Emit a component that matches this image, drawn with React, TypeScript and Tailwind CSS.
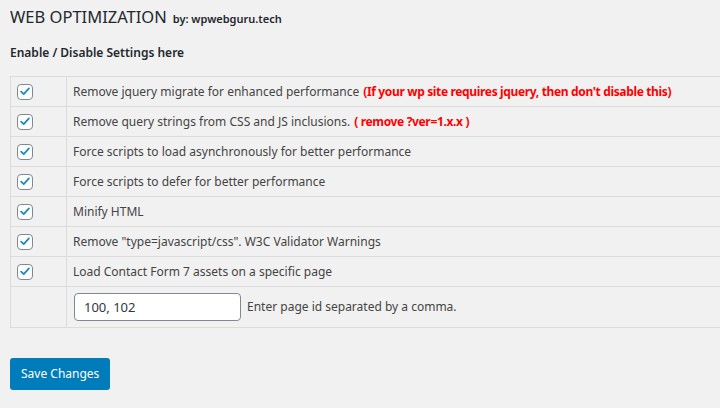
import React from 'react';

const rows: { label: string; note?: string }[] = [
  { label: 'Remove jquery migrate for enhanced performance', note: "(If your wp site requires jquery, then don't disable this)" },
  { label: 'Remove query strings from CSS and JS inclusions.', note: '( remove ?ver=1.x.x )' },
  { label: 'Force scripts to load asynchronously for better performance' },
  { label: 'Force scripts to defer for better performance' },
  { label: 'Minify HTML' },
  { label: 'Remove "type=javascript/css". W3C Validator Warnings' },
  { label: 'Load Contact Form 7 assets on a specific page' },
];

function CheckBox() {
  return (
    <span className="flex h-4 w-4 items-center justify-center rounded-[4px] border border-[#7e8993] bg-white">
      <svg viewBox="0 0 20 20" className="h-[15px] w-[15px]">
        <path d="M4.5 10.2 L8.2 13.8 L15.6 5.6" fill="none" stroke="#1e8cbe" strokeWidth="2.6" strokeLinecap="round" strokeLinejoin="round" />
      </svg>
    </span>
  );
}

export default function App() {
  return (
    <div className="min-h-[408px] w-[720px] overflow-hidden bg-[#f1f1f1] pl-[10px] pt-[5px] text-[12px] text-[#444] [font-family:'Noto_Sans',sans-serif]">
      <h1 className="flex items-baseline gap-[6px] text-[16.5px] leading-[24px] text-[#23282d]">
        WEB OPTIMIZATION
        <span className="text-[11px] font-semibold">by: wpwebguru.tech</span>
      </h1>

      <h3 className="mt-[12px] text-[12px] font-semibold leading-[20px] text-[#23282d]">Enable / Disable Settings here</h3>

      {/* Settings table */}
      <table className="mt-[13px] w-[760px] border-collapse border-l border-t border-[#dcdcdc]">
        <tbody>
          {rows.map((r, i) => (
            <tr key={i} className="h-[30px] border-b border-[#dcdcdc]">
              <td className="w-[56px] border-r border-[#dcdcdc] pl-[6px] align-middle">
                <CheckBox />
              </td>
              <td className="pl-[6px] align-middle">
                {r.label}
                {r.note && <span className="ml-[4px] font-bold tracking-[-0.35px] text-[#ff0000]">{r.note}</span>}
              </td>
            </tr>
          ))}
          <tr className="h-[41px] border-b border-[#dcdcdc]">
            <td className="w-[56px] border-r border-[#dcdcdc]"></td>
            <td className="pl-[7px] align-middle">
              <div className="flex items-center gap-[6px]">
                <input
                  defaultValue="100, 102"
                  className="h-[28px] w-[167px] rounded-[4px] border border-[#7e8993] bg-white px-[9px] text-[13px] text-[#32373c] outline-none"
                />
                <span>Enter page id separated by a comma.</span>
              </div>
            </td>
          </tr>
        </tbody>
      </table>

      <button className="mt-[30px] h-[32px] rounded-[3px] bg-[#007cba] px-[11px] text-[12px] text-white">Save Changes</button>
    </div>
  );
}
